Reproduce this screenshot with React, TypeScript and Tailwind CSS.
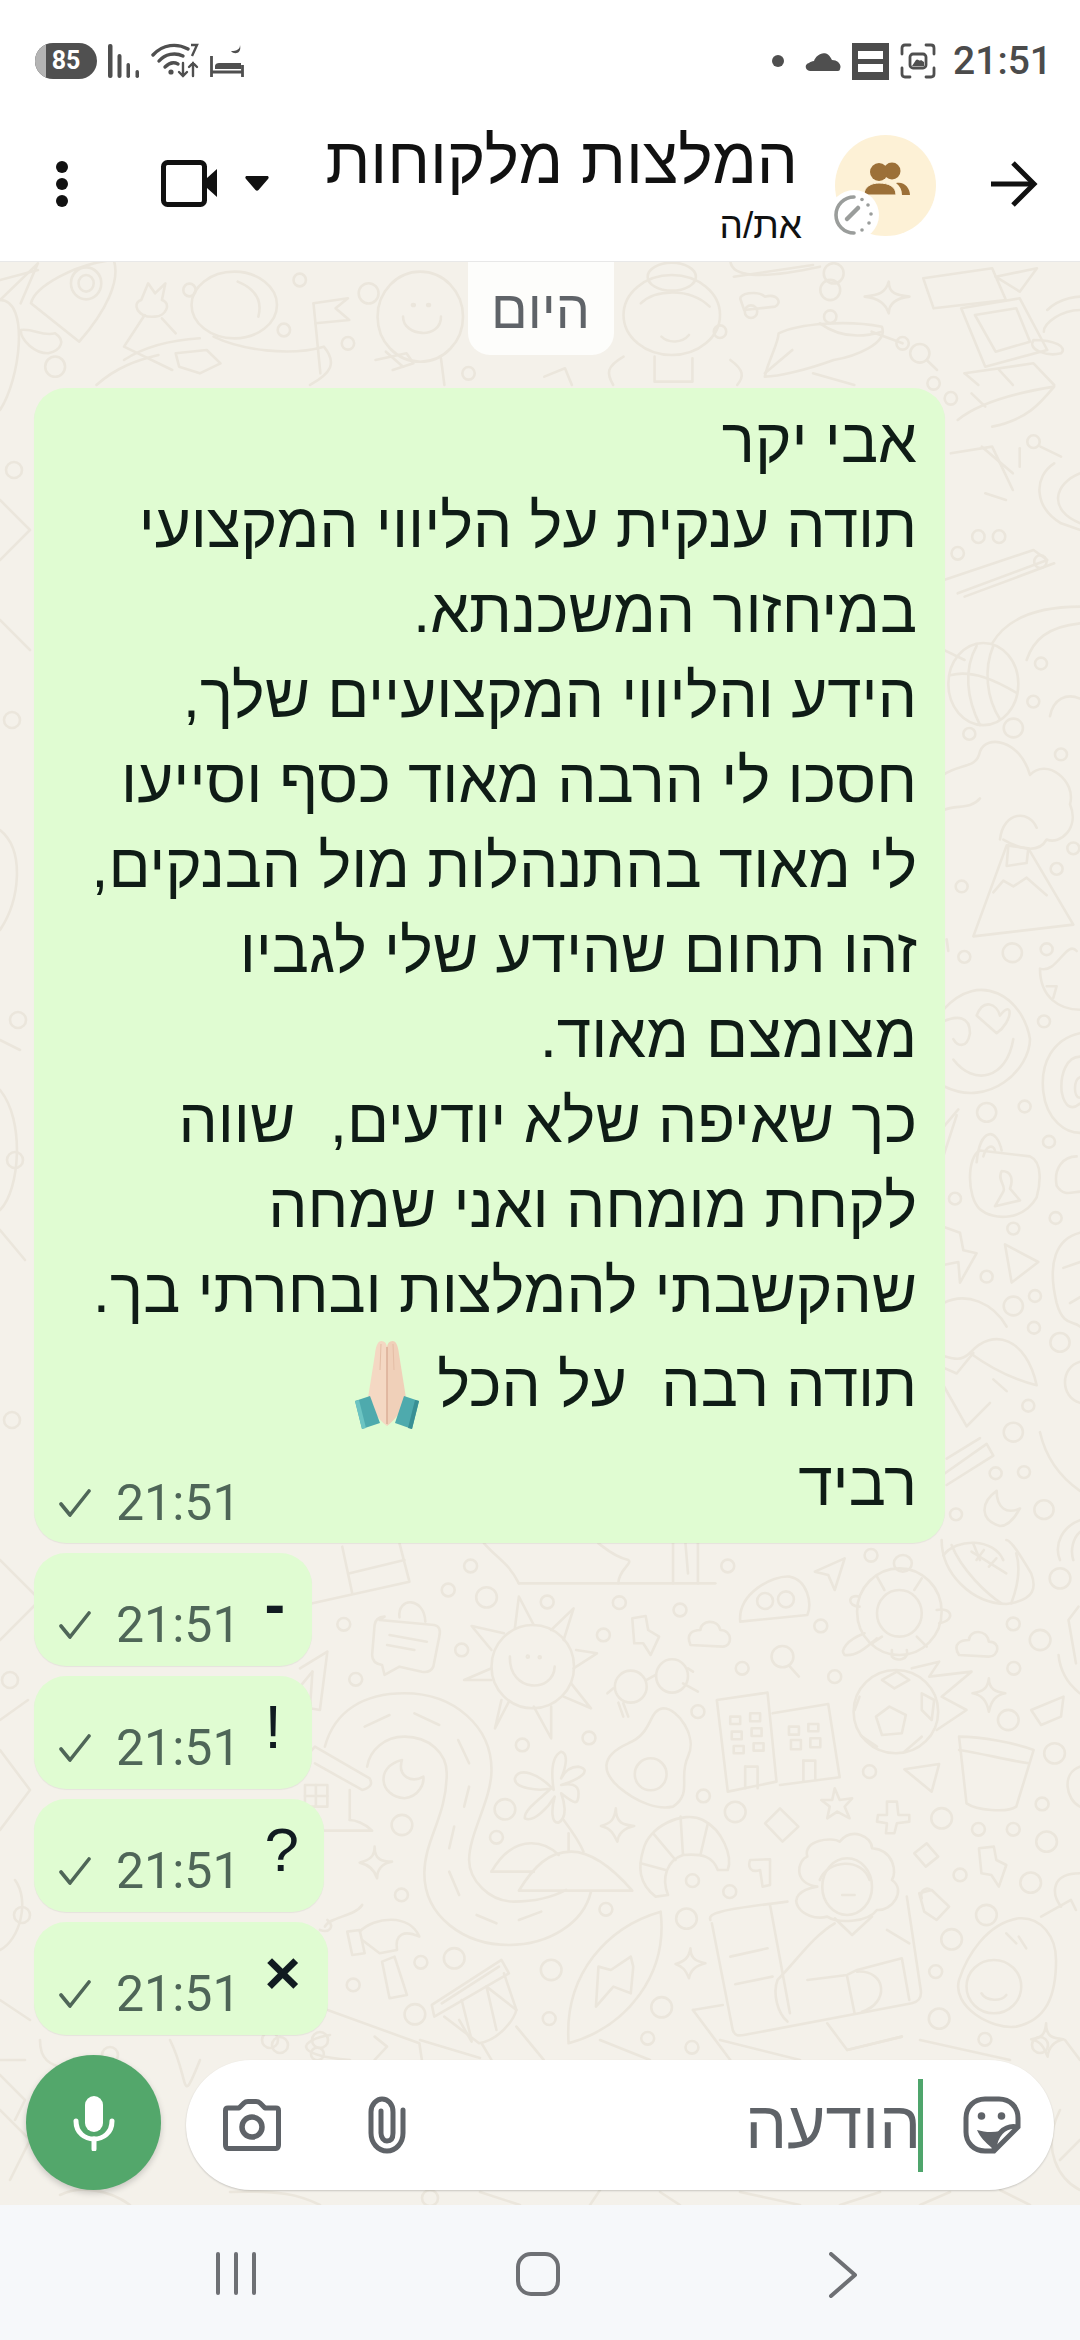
import React from "react";

const font = { fontFamily: '"Liberation Sans", "DejaVu Sans", sans-serif' };

const e = (cx: number, cy: number, rx: number, ry: number) =>
  `M${cx - rx} ${cy} A${rx} ${ry} 0 1 0 ${cx + rx} ${cy} A${rx} ${ry} 0 1 0 ${cx - rx} ${cy}Z`;

const bottomSet: string[] = [
  "M25 190 L220 125 L200 10", "M100 100 L210 60", "M85 20 L105 160", "M440 130 L835 130", "M370 10 C400 60 420 70 440 130",
  "M640 130 C640 90 670 70 660 60 C630 50 610 20 600 10", "M750 10 L750 130", "M800 10 L800 130", "M775 10 L780 100",
  "M160 240 L270 255 Q285 260 280 290 L268 380 Q262 400 245 395 L200 380 L170 405 L165 375 Q145 370 145 345 L150 255 Q152 232 170 230Z",
  "M200 232 C195 170 250 170 252 245", "M180 285 L255 305", "M175 315 L230 330",
  e(468, 380, 83, 125), "M422 350 C420 460 510 460 512 380", e(458, 350, 2, 3), e(482, 352, 2, 3),
  "M432 265 L440 170 L470 255", "M505 270 L550 205 L530 300", "M555 330 L597 340 L550 385", "M545 430 L585 505 L530 470", "M470 500 L505 595 L505 500", "M420 485 L392 565 L405 480", "M385 420 L330 420 L385 385", "M385 330 L345 258 L410 280",
  "M0 385 L55 335 L40 510 L20 505 L25 395", "M0 440 L25 395",
  "M50 620 C70 510 130 460 210 460 C310 460 385 560 385 690 C385 780 340 880 340 960 C340 1020 380 1085 430 1085 C480 1085 510 1070 535 1050",
  "M585 1055 C570 1150 500 1215 420 1215 C330 1215 250 1130 250 1000 C250 900 295 830 295 700 C295 640 260 590 210 590 C170 590 140 630 135 680",
  "M130 560 L180 525", "M230 520 L280 555", "M318 600 L340 670", "M340 740 L330 800", "M310 860 L300 925", "M300 995 L320 1065", "M355 1125 L395 1150", "M440 1140 L485 1115",
  "M0 670 L30 620 L140 715 Q150 740 125 750 L30 670", "M10 735 H55 V800 H10Z", "M32 735 V800", "M10 768 H55", "M100 750 L100 840", "M50 872 L145 872 C130 850 110 840 100 840",
  "M205 660 C150 680 160 770 210 775 C240 770 250 730 248 710 C225 730 195 710 205 660Z",
  "M150 920 C150 960 165 965 185 965 C165 970 155 990 155 1015 C150 990 140 975 120 968 C140 960 150 950 150 920Z",
  "M385 995 C410 930 440 910 465 910 C490 910 510 930 520 945", "M385 995 L470 995", "M440 1052 L668 1052 C620 970 580 935 545 935 C500 935 470 980 440 1052Z",
  "M510 750 C480 700 440 680 432 715 C430 745 480 755 505 745 C480 780 450 810 452 835 C470 850 500 800 512 770 C505 810 505 850 520 848 C540 830 530 780 525 760 C550 790 560 800 560 760 C560 730 540 730 525 735 C560 720 590 690 560 680 C540 680 530 700 525 715 C535 680 540 640 525 635 C505 650 505 700 510 750Z",
  "M530 840 C545 870 560 900 570 935", "M540 880 L540 935",
  "M730 505 C700 510 710 580 660 610 C600 650 610 700 640 740 C680 790 720 810 750 800 C790 760 760 710 780 650 C800 590 760 505 730 505Z", e(705, 703, 32, 48),
  e(665, 440, 32, 48), e(748, 408, 32, 50), "M697 420 L715 405", "M640 488 L650 530", "M650 490 L660 530", "M780 385 L790 395", "M770 430 L800 455", "M630 445 L618 460",
  "M668 235 L695 228 L700 270 L722 290 L705 345 L690 310 L672 310Z",
  "M785 315 C775 280 790 270 805 270 C805 240 840 235 845 270 C870 270 870 320 850 320Z",
  e(970, 350, 22, 32), "M985 380 L1003 410",
  "M885 245 C880 160 950 105 985 110 C1020 120 1030 190 1020 225Z", e(935, 183, 16, 24), e(977, 178, 16, 24),
  "M1035 95 L1095 55 L1075 150 L1062 105Z",
  e(1205, 215, 85, 130), e(1205, 220, 45, 70), e(1212, 70, 18, 25), "M1135 280 C1100 300 1085 330 1095 345 C1120 350 1140 320 1160 295", "M1190 330 L1190 350 C1200 365 1225 360 1220 330", "M1280 210 C1310 200 1320 240 1285 250", "M1125 170 C1100 160 1100 200 1125 200", "M1175 150 L1160 110", "M1235 150 L1250 115", "M1170 290 L1150 310", "M1240 290 L1260 320",
  "M1290 0 C1290 100 1350 190 1420 192 C1480 180 1480 140 1470 100 C1450 50 1430 0 1420 0", "M1350 35 L1420 100", "M1360 60 L1375 30", "M1385 80 L1400 55", "M1310 15 C1330 90 1380 160 1410 190", "M1440 40 C1450 90 1440 150 1430 190",
  "M1325 345 C1310 310 1330 300 1345 300 C1345 270 1380 265 1385 305 C1410 305 1405 350 1385 350Z",
  e(1198, 515, 85, 125), "M1185 500 L1218 525 L1210 580 L1170 585 L1158 530Z", "M1170 420 L1200 395 L1225 420 L1195 445Z", "M1250 460 L1275 480 L1270 540 L1250 510Z", "M1115 510 L1125 470", "M1130 590 L1160 620", "M1215 635 L1250 590",
  "M1230 385 L1285 365 L1265 410 L1350 395 L1290 470 L1340 510 L1280 570",
  "M838 480 L940 458 L958 725 L860 755Z", "M950 520 L1062 492 L1085 712 L965 735",
  "M865 530 H885 V552 H865Z", "M905 520 H925 V544 H905Z", "M868 575 H888 V598 H868Z", "M908 565 H928 V588 H908Z", "M872 618 H892 V640 H872Z", "M912 610 H932 V632 H912Z",
  "M983 560 H1003 V584 H983Z", "M1022 552 H1042 V574 H1022Z", "M987 600 H1007 V628 H987Z", "M1026 595 H1046 V622 H1026Z", "M895 680 H920 V745", "M895 680 V745", "M1012 662 H1036 V720", "M1012 662 V725",
  "M1325 590 C1370 590 1440 610 1475 630 L1440 800 C1420 820 1360 810 1340 790Z", "M1325 630 C1370 640 1420 660 1465 670",
  "M1215 688 L1285 672 L1270 755Z",
  "M1075 745 L1085 780 L1110 775 L1095 800 L1105 835 L1080 815 L1060 835 L1065 800 L1048 780 L1070 780Z",
  "M1180 785 L1200 785 L1203 825 L1225 825 L1225 845 L1200 850 L1195 880 L1178 880 L1180 850 L1160 845 L1162 825 L1180 825Z",
  "M965 805 L1002 860 L970 905 L935 850Z", "M1260 910 L1283 950 L1258 980 L1235 940Z",
  "M635 805 C635 850 650 855 672 858 C650 865 640 880 638 905 C630 880 625 865 605 858 C625 850 632 840 635 805Z",
  "M1385 415 C1385 450 1400 455 1418 460 C1400 465 1390 480 1385 515 C1380 480 1370 465 1352 460 C1370 455 1382 450 1385 415Z",
  "M690 930 C700 860 770 810 810 840 C850 870 870 950 860 990 L840 990 C830 950 810 940 770 945 C740 960 725 1010 740 1065 L715 1070 C680 1030 680 980 690 930Z", "M765 830 L770 945", "M820 850 L805 945", "M710 880 L755 960", "M685 970 L735 990",
  "M905 960 L945 958 L945 1035 L930 1040 L925 990 C905 1000 900 980 905 960Z",
  "M1365 925 L1395 920 L1400 960 L1420 975 L1405 1040 L1390 1005 L1370 1000Z",
  "M1040 1040 C990 1030 1000 960 1020 950 C1010 900 1070 890 1085 905 C1110 860 1150 890 1150 925 C1195 930 1200 1000 1190 1020 C1220 1050 1190 1115 1160 1110 C1140 1150 1080 1150 1060 1130 C1010 1150 960 1060 1040 1040Z",
  e(1100, 1040, 50, 85), "M1045 1020 C1060 960 1130 950 1145 1020", "M1090 1065 L1115 1065", "M1075 1135 L1110 1185 L1150 1130", "M1075 1150 C1030 1190 1000 1260 960 1320 C950 1360 960 1420 980 1445", "M1180 1170 L1225 1210",
  "M825 1140 C820 1120 840 1110 980 1085", "M828 1150 L870 1470 C875 1490 880 1488 900 1483 L1230 1390 C1245 1385 1250 1370 1248 1350 L1220 1070",
  "M945 1095 L985 1420", "M865 1250 L940 1225", "M875 1333 L950 1310", "M1020 1320 L1100 1305 L1120 1290 L1210 1255 L1225 1380", "M1100 1310 L1115 1420", "M1120 1295 C1180 1290 1185 1390 1130 1415",
  "M790 1410 L850 1395", "M790 1410 L865 1560", "M1210 1490 L1100 1530 L1060 1450", "M1100 1530 L1210 1490",
  "M725 1115 C620 1160 530 1300 540 1510 C660 1460 740 1300 725 1115Z", "M665 1250 L625 1290 L600 1280 L595 1400 L630 1340 L665 1360 L670 1280Z",
  "M95 1175 L120 1170 L130 1240 L105 1245Z", "M120 1175 C150 1130 220 1120 240 1190 C210 1170 190 1180 195 1230 L160 1240 L125 1200", "M165 1265 L180 1375 L215 1365 L190 1250Z",
  "M265 1395 L405 1260 L420 1300 L270 1430Z", "M285 1390 L400 1280", "M290 1430 L360 1510 C400 1500 430 1440 435 1410 L410 1300", "M320 1440 L345 1505", "M375 1340 L395 1470", "M375 1340 L435 1410", "M325 1380 L345 1500", "M365 1510 L385 1560", "M435 1460 L490 1560",
  "M785 1225 C785 1260 800 1265 815 1270 C795 1278 785 1290 782 1315 C775 1290 770 1280 755 1272 C772 1265 782 1255 785 1225Z",
  "M1445 1135 C1380 1150 1340 1250 1325 1320 C1310 1400 1390 1470 1440 1460 C1500 1440 1520 1370 1520 1260 C1520 1190 1490 1130 1445 1135Z", e(1395, 1340, 55, 80), "M1370 1360 C1380 1385 1410 1385 1420 1365", "M1490 1130 L1550 1080 L1560 1110", "M1420 1180 L1440 1210", "M1445 1190 L1460 1225",
  "M1500 1450 C1500 1490 1512 1495 1535 1498 C1515 1505 1505 1520 1503 1550 C1495 1520 1490 1505 1470 1498 C1490 1495 1498 1485 1500 1450Z",
  "M1245 1060 L1270 1050 L1305 1100 L1280 1140 L1255 1115Z", "M1250 1075 C1245 1050 1260 1040 1268 1050",
  "M0 1380 L240 1510 L245 1560", "M150 1490 L175 1520 L150 1560", "M55 1140 C70 1160 60 1180 40 1170", "M125 1095 C110 1130 60 1130 50 1160",
  "M1565 200 L1545 240 L1560 370", "M1525 345 C1530 420 1560 450 1568 460", "M1470 510 L1535 470 L1530 530 L1490 555Z", "M1568 680 C1530 700 1540 780 1568 800", "M1568 1000 C1510 1000 1510 1060 1530 1100",
];

const bottomDots: [number, number, number][] = [
  [343, 78, 1], [298, 150, 1], [375, 172, 2], [497, 186, 1], [642, 188, 1], [764, 210, 1], [88, 253, 1], [610, 285, 1], [325, 330, 1], [112, 418, 1], [889, 385, 1], [1075, 410, 1], [1047, 258, 1], [860, 78, 1], [1148, 46, 1], [1528, 115, 2], [1434, 252, 1], [1488, 300, 2], [1435, 385, 1], [1424, 540, 2], [800, 515, 1], [447, 615, 1], [581, 594, 1], [1145, 695, 1], [1517, 640, 2], [412, 808, 2], [811, 768, 1], [875, 816, 2], [205, 855, 2], [395, 892, 1], [1290, 835, 2], [1492, 792, 1], [1364, 868, 1], [1434, 868, 1], [1501, 905, 2], [204, 1065, 1], [789, 1022, 1], [864, 1055, 1], [1327, 1005, 1], [1469, 1028, 2], [615, 1108, 1], [777, 1136, 2], [1380, 1125, 2], [1310, 1198, 2], [310, 1255, 2], [243, 1267, 1], [107, 1335, 1], [231, 1423, 2], [505, 1290, 2], [727, 1402, 2], [501, 1436, 1], [1278, 1295, 1], [1285, 1436, 2], [1377, 1498, 1], [699, 1495, 1], [788, 1522, 1], [35, 1542, 1],
];

const rightSet: string[] = [
  e(310, 75, 105, 70), "M210 60 C280 50 350 70 410 90", "M290 10 C250 50 260 100 300 145", "M340 10 C310 50 320 100 360 135",
  "M510 130 C520 100 560 90 600 100", "M190 230 C240 210 290 220 300 190 C320 160 420 170 450 230 C500 200 590 240 570 280 C600 320 540 350 500 340 C470 370 400 350 370 340", "M190 290 C230 280 270 290 300 270", "M360 340 C370 290 450 290 470 320",
  "M280 505 L380 350 L445 355 L580 485Z", "M385 350 L380 385 L440 380 L445 355", "M340 430 L370 410 L400 420 L440 405 L500 435",
  "M190 630 C300 560 430 610 450 680 C450 730 330 800 190 760", "M290 640 C310 610 350 620 360 640 C400 610 400 650 350 670 Z", "M190 650 C230 640 270 640 270 670 C260 700 230 690 220 680", "M220 715 C280 760 380 750 400 680",
  "M600 670 C520 680 480 720 490 770 C500 820 560 840 600 840", "M600 710 C560 710 540 740 545 770 C555 800 580 800 600 790", "M600 745 C580 750 580 780 600 780",
  "M590 530 C560 510 530 570 480 560 C480 610 540 630 600 630", "M500 590 L530 590 L520 610",
  "M590 880 C550 880 520 900 530 930 C550 950 580 940 600 940", "M190 830 L235 800", "M190 880 L230 810",
  "M290 890 C300 830 350 830 365 870", "M310 880 C320 860 340 860 345 870", "M300 870 L450 880 C490 890 480 930 470 950 C430 990 340 990 300 970 C260 950 260 880 300 870Z", "M365 905 C350 920 380 930 370 940 L345 965 L420 955 L390 935 C400 920 395 905 365 905Z",
  "M190 1000 L240 1010 L250 1040 L290 1045 L240 1095 L235 1060 L190 1065", "M375 1030 L475 1060 L395 1095Z",
  "M190 1130 C260 1110 340 1130 380 1170", "M270 1215 C340 1170 440 1190 470 1270 C400 1260 330 1240 270 1215Z", "M190 1240 L230 1250 L280 1215", "M190 1270 L260 1340 L330 1300", "M340 1260 L380 1280",
  "M195 1420 L320 1370 L340 1390 L200 1440", "M200 1395 L300 1360", "M350 1450 C300 1470 300 1500 360 1510 C390 1510 410 1490 420 1480 C380 1490 350 1480 350 1450Z",
  "M600 1230 C540 1240 540 1290 600 1300", "M480 1350 C500 1400 550 1430 600 1450", "M600 1010 C530 1020 500 1060 530 1130 C550 1170 580 1160 600 1170", "M550 1070 L600 1060", "M570 1130 L600 1120", "M600 1500 C550 1510 520 1540 540 1568", "M190 1560 C230 1530 340 1530 370 1568", "M280 1540 L300 1568", "M600 1520 C580 1530 570 1550 580 1568", "M200 510 L205 530", "M190 1220 C220 1225 240 1230 270 1215",
];

const rightDots: [number, number, number][] = [
  [483, 40, 1], [460, 105, 1], [268, 160, 1], [400, 150, 2], [543, 195, 1], [245, 420, 1], [530, 390, 1], [580, 355, 1], [253, 540, 1], [397, 533, 2], [500, 527, 1], [492, 650, 1], [320, 805, 2], [434, 795, 1], [507, 855, 1], [225, 952, 1], [527, 985, 1], [400, 1003, 1], [320, 1085, 1], [465, 1118, 1], [400, 1135, 2], [462, 1172, 1], [540, 1197, 2], [445, 1305, 1], [400, 1350, 2], [347, 1420, 1], [432, 1418, 1], [492, 1482, 2], [228, 1490, 1],
];

const topSet: string[] = [
  "M0 120 L55 10 L30 130", "M0 60 L55 30", "M45 130 C50 80 110 10 165 0 C175 60 155 150 115 245 L45 130Z", e(125, 70, 22, 48), e(125, 70, 11, 25), "M30 210 C30 240 50 280 70 280 C90 270 95 240 80 220 C60 230 50 205 30 210Z",
  "M205 120 L215 70 L225 100 L240 70 L235 120 C250 130 240 170 225 170 C200 175 190 130 205 120Z", "M210 165 L180 260 L250 330", "M235 175 L255 220",
  e(340, 135, 62, 100), "M345 65 C375 90 380 130 375 170", "M255 280 L300 270 L320 310 L290 340 L260 320Z", "M180 300 C210 260 250 240 290 235", "M310 230 C350 270 420 290 470 260 C490 310 480 340 450 375", "M140 375 C170 320 200 300 230 285",
  "M455 130 L505 115 L487 145 L507 180 L458 190", "M455 130 L465 340",
  e(610, 170, 62, 135), "M585 170 C585 230 640 240 640 170", e(600, 135, 2, 3), e(622, 135, 2, 3), "M545 300 L590 280 L600 310 L570 330", "M560 275 L585 320",
  "M1060 0 C1060 50 1100 60 1190 20", "M1065 50 L1180 15",
  e(975, 165, 70, 120), e(975, 50, 35, 42), "M930 130 C950 90 1000 80 1030 140", "M960 230 C970 250 990 250 1000 225", "M905 290 C880 320 880 340 890 375", "M1060 300 C1080 330 1080 350 1070 375", "M950 290 L950 365 L1005 365 L1005 295",
  "M1290 65 C1290 100 1300 105 1320 110 C1300 115 1290 130 1290 160 C1285 130 1275 115 1255 110 C1275 105 1285 100 1290 65Z",
  "M1340 55 L1440 25 L1460 120 L1355 145Z", "M1395 145 L1480 115 L1520 270 L1430 320Z", "M1415 165 L1475 145 L1495 245 L1445 275Z",
  "M1445 50 L1505 25 L1480 95Z", "M1520 150 C1540 110 1568 110 1568 110", "M1515 215 C1515 190 1540 150 1568 150", "M1500 240 C1490 270 1520 290 1540 280 C1550 260 1530 240 1500 240Z",
  "M1130 220 C1160 190 1230 180 1280 200 C1290 250 1240 290 1210 300 C1170 330 1130 350 1110 350 C1115 300 1130 250 1130 220Z", "M1190 190 C1210 220 1240 240 1280 215", "M1150 270 L1110 340",
  "M1075 120 C1070 100 1100 90 1110 110 C1130 100 1135 130 1125 140 L1080 150Z", e(1335, 280, 14, 28), "M1345 300 L1360 330", "M1400 340 L1500 310 L1530 375", "M1400 340 L1420 375", "M1450 330 L1470 375",
  "M790 350 L820 325 L830 375", "M640 295 L645 375", "M1265 215 L1310 250", "M1180 340 L1240 375",
];

const topDots: [number, number, number][] = [
  [435, 60, 1], [275, 90, 1], [412, 210, 1], [505, 250, 1], [535, 100, 2], [1045, 215, 1], [1090, 155, 1], [1205, 170, 1], [1205, 90, 2], [1210, 40, 2], [1355, 370, 1], [80, 320, 2], [680, 340, 1], [1310, 250, 1],
];

const midSet: string[] = [
  "M1390 480 C1420 430 1470 400 1530 380 C1510 430 1490 480 1440 500", "M1410 400 L1430 440", "M1380 580 L1440 560 L1470 690", "M1425 560 L1470 640", "M1530 610 C1500 650 1500 740 1540 790 L1568 810", "M1568 640 C1530 670 1520 750 1568 790", "M1430 700 L1460 720", "M1370 960 L1500 870 L1520 900 L1390 1000", "M1400 1010 L1530 910", "M1568 1040 C1500 1040 1460 1080 1440 1150", "M1568 1090 C1520 1100 1500 1140 1490 1200", "M1360 1160 L1400 1200", "M1480 565 L1480 620", "M1510 560 L1540 590",
];
const midDots: [number, number, number][] = [
  [1380, 415, 1], [1500, 545, 1], [1450, 830, 1], [1390, 880, 1], [1510, 905, 1], [1420, 830, 1],
];

const leftSet: string[] = [
  "M0 300 C30 300 20 380 0 410", "M0 620 L30 650", "M0 830 C25 850 20 900 0 930", "M0 1230 L25 1260", "M0 500 L30 530 L0 560", "M0 1040 L20 1050", "M0 1090 C25 1120 20 1190 0 1210",
  "M0 1560 L40 1600 L0 1640", "M0 1750 L30 1790 L0 1830", "M0 2000 L30 2020", "M15 1880 C30 1900 20 1940 0 1950", "M0 2110 L30 2140 L10 2180", "M0 2060 L25 2060", "M0 1720 L28 1700",
];
const farBottom: string[] = [
  "M40 2040 C40 2060 50 2065 65 2068 C50 2072 42 2080 40 2100", "M0 2075 L25 2100 L15 2120", "M170 2040 C190 2080 180 2110 200 2060", "M330 2035 C300 2040 290 2055 350 2060", "M420 2040 L480 2058", "M600 2040 L650 2060", "M720 2040 L800 2060", "M920 2040 L1010 2060",
  "M60 2195 C80 2185 110 2190 130 2205", "M230 2192 C280 2190 300 2195 320 2205", "M480 2192 L520 2205", "M600 2190 L590 2205", "M660 2192 L680 2205", "M740 2192 L800 2205", "M880 2192 L840 2205", "M950 2192 L920 2205", "M1000 2190 L1030 2205", "M1060 2110 C1040 2150 1060 2180 1080 2190", "M1065 2040 L1080 2060", "M1060 2160 L1080 2140",
];

function Layer({ t, paths, dots, dr }: { t: string; paths: string[]; dots: [number, number, number][]; dr: [number, number] }) {
  return (
    <g transform={t}>
      {paths.map((d, i) => (
        <path key={i} d={d} vectorEffect="non-scaling-stroke" />
      ))}
      {dots.map(([x, y, k], i) => (
        <path key={`d${i}`} d={e(x, y, dr[0] * k * (k === 2 ? 0.8 : 1), dr[1] * k * (k === 2 ? 0.8 : 1))} vectorEffect="non-scaling-stroke" />
      ))}
    </g>
  );
}

function Doodles() {
  return (
    <svg className="absolute left-0 top-0" width="1080" height="1943" viewBox="0 262 1080 1943" fill="none" stroke="#ebe6dc" strokeWidth="2.6" strokeLinecap="round" strokeLinejoin="round">
      <Layer t="translate(300 1540) scale(0.4974 0.3333)" paths={bottomSet} dots={bottomDots} dr={[13, 19]} />
      <Layer t="translate(880 640) scale(0.3333 0.5868)" paths={rightSet} dots={rightDots} dr={[18, 10]} />
      <Layer t="translate(0 260) scale(0.689 0.3333)" paths={[...topSet, ...midSet]} dots={[...topDots, ...midDots]} dr={[9, 19]} />
      <Layer t="translate(0 0)" paths={[...leftSet, ...farBottom]} dots={[[14, 470, 1], [12, 720, 1], [18, 1020, 1], [15, 1160, 1], [12, 1420, 1], [10, 1680, 1], [22, 1915, 1], [110, 2055, 1], [280, 2045, 1], [320, 2040, 1], [270, 2040, 1], [430, 2198, 1], [1040, 2045, 1]]} dr={[8, 8]} />
    </svg>
  );
}

function Check() {
  return (
    <svg width="32" height="28" viewBox="0 0 32 28" fill="none" stroke="#4f6658" strokeWidth="3.6" strokeLinecap="round" strokeLinejoin="round">
      <path d="M2 15 L11 26 L30 2" />
    </svg>
  );
}

function Meta() {
  return (
    <div className="flex items-center gap-[25px] text-[#4f6658] text-[50px] leading-[44px] font-['Roboto']">
      <Check />
      <span>21:51</span>
    </div>
  );
}

function Small({ t, w, cls }: { t: string; w: string; cls: string }) {
  return (
    <div className={`${w} h-[113px] rounded-[32px] bg-[#e0fcd2] pl-[25px] flex items-end pb-[19px] shadow-[0_1px_1px_rgba(0,0,0,0.06)]`}>
      <Meta />
      <span className={`ml-[24px] mb-[8px] text-[#111b21] text-[62px] leading-[70px] ${cls}`}>{t}</span>
    </div>
  );
}

function Pray() {
  return (
    <svg width="68" height="90" viewBox="0 0 68 90">
      <path d="M34 86 C24 78 17 68 15 58 L22 14 C23 5 25 1 28.5 1 C31.5 1 33.5 3 34 7Z" fill="#f4d8c3" />
      <path d="M34 86 C44 78 51 68 53 58 L46 14 C45 5 43 1 39.5 1 C36.5 1 34.5 3 34 7Z" fill="#f0d0b9" />
      <path d="M34 7 L34 84" stroke="#d9ad95" strokeWidth="1.4" />
      <path d="M28 4 L27 30 M40 4 L41 30" stroke="#e5bea6" strokeWidth="1" />
      <path d="M2 61 L17 56 L27 83 L9 89Z" fill="#4eaaad" />
      <path d="M66 61 L51 56 L42 83 L59 89Z" fill="#4eaaad" />
      <path d="M2 61 L9 89 L13 88 L6 60Z" fill="#6cc4c2" />
      <path d="M66 61 L59 89 L55 88 L62 60Z" fill="#398f94" />
    </svg>
  );
}

const lines = [
  "אבי יקר",
  "תודה ענקית על הליווי המקצועי",
  "במיחזור המשכנתא.",
  "הידע והליווי המקצועיים שלך,",
  "חסכו לי הרבה מאוד כסף וסייעו",
  "לי מאוד בהתנהלות מול הבנקים,",
  "זהו תחום שהידע שלי לגביו",
  "מצומצם מאוד.",
  "כך שאיפה שלא יודעים,  שווה",
  "לקחת מומחה ואני שמחה",
  "שהקשבתי להמלצות ובחרתי בך.",
];

function StatusLeft() {
  return (
    <div className="flex items-center gap-[11px]">
      <div className="w-[62px] h-[36px] rounded-full bg-[#505050] text-white text-[25px] font-bold flex items-center justify-center font-['Roboto'] relative overflow-hidden">
        <div className="absolute left-0 top-0 bottom-0 w-[11px] bg-[#b4b4b4]" />
        <span className="relative">85</span>
      </div>
      <svg width="32" height="36" viewBox="0 0 32 36" fill="#4f4f4f">
        <rect x="0" y="1" width="4.5" height="34" rx="2" />
        <rect x="9.5" y="11" width="4" height="24" rx="2" />
        <rect x="18.5" y="20" width="3.5" height="15" rx="1.7" />
        <rect x="27.5" y="27" width="3.5" height="8" rx="1.7" />
      </svg>
      <svg width="48" height="36" viewBox="0 0 48 36" fill="none" stroke="#4f4f4f" strokeWidth="3.4" strokeLinecap="round">
        <path d="M2 12 C12 1 26 0 37 6" />
        <path d="M8 18 C14 11 24 9 32 13" />
        <path d="M14 24 C18 20 23 19 27 21" />
        <circle cx="20" cy="29" r="2.6" fill="#4f4f4f" stroke="none" />
        <path d="M40 2 H46 L41 13" strokeWidth="2.4" strokeLinecap="butt" />
        <path d="M32 20 V33 M28 29 L32 33 L36 29 M42 33 V20 M38 24 L42 20 L46 24" strokeWidth="2.4" />
      </svg>
      <svg width="34" height="34" viewBox="0 0 34 34" fill="none" stroke="#4f4f4f" strokeWidth="2.8">
        <path d="M1.5 12 V33 M1.5 28 H32.5 M32.5 21 V33" />
        <path d="M5 22 C5 20 7 19 9 19 H31 V25 H5Z" fill="#4f4f4f" stroke="none" />
        <path d="M30 1 C30 5 27 7 21 7 C24 11 32 10 30 1Z" fill="#4f4f4f" stroke="none" />
      </svg>
    </div>
  );
}

function StatusRight() {
  return (
    <div className="flex items-center">
      <div className="w-[12px] h-[12px] rounded-full bg-[#4f4f4f] mr-[21px]" />
      <svg className="mr-[11px]" width="36" height="22" viewBox="0 0 36 22" fill="#4f4f4f">
        <path d="M5 21 C0 21 -1 14 4 13 C5 12 7 11 9 11 C11 4 22 -2 27 10 C33 10 37 15 35 19 C35 20 34 21 33 21Z" />
      </svg>
      <div className="w-[37px] h-[37px] bg-[#4c4c4c] flex flex-col justify-center gap-[5px] px-[6px] mr-[11px]">
        <div className="h-[8px] bg-white" />
        <div className="h-[8px] bg-white" />
      </div>
      <svg className="mr-[17px]" width="36" height="36" viewBox="0 0 36 36" fill="none" stroke="#4f4f4f" strokeWidth="2.8" strokeLinecap="round">
        <path d="M2 11 V5 C2 3 3 2 5 2 H10 M26 2 H31 C33 2 34 3 34 5 V11 M34 25 V31 C34 33 33 34 31 34 H26 M10 34 H5 C3 34 2 33 2 31 V25" />
        <rect x="10" y="11" width="16" height="14" rx="3" />
        <path d="M12 23 L16 17 C18 15 19 19 21 17 L24 19 V23Z" fill="#4f4f4f" stroke="none" />
      </svg>
      <span className="text-[39px] font-medium leading-none font-['Roboto'] text-[#4b4b4b]">21:51</span>
    </div>
  );
}

function Header() {
  return (
    <div className="h-[152px] flex items-center border-b border-[#e8e8e8] pl-[56px] pr-[41px]">
      <svg width="12" height="46" viewBox="0 0 12 46" fill="#111" className="mt-[-4px]">
        <circle cx="6" cy="6" r="6" />
        <circle cx="6" cy="23" r="6" />
        <circle cx="6" cy="40" r="6" />
      </svg>
      <svg className="ml-[93px] mt-[-4px]" width="57" height="47" viewBox="0 0 57 47" fill="none">
        <rect x="2.5" y="2.5" width="41" height="42" rx="4" stroke="#111" strokeWidth="5" />
        <path d="M46 18 L56 9 V37 L46 28Z" fill="#111" />
      </svg>
      <svg className="ml-[27px] mt-[-4px]" width="24" height="15" viewBox="0 0 24 15" fill="#111">
        <path d="M2 0 H22 C24 0 24 2 23 3 L13.5 14 C12.5 15 11.5 15 10.5 14 L1 3 C0 2 0 0 2 0Z" />
      </svg>
      <div className="flex-1 text-[#111]" dir="rtl">
        <div className="text-[65px] leading-[70px] pr-[4px]">המלצות מלקוחות</div>
        <div className="text-[37px] leading-[40px] mt-[10px]">את/ה</div>
      </div>
      <div className="ml-[33px] w-[101px] h-[101px] rounded-full bg-[#fdf1d6] relative flex items-center justify-center shrink-0">
        <svg width="46" height="36" viewBox="0 0 46 36" fill="#9c7038" className="mt-[-12px] ml-[2px]">
          <circle cx="28" cy="9" r="8.5" />
          <path d="M32 21 C40 19 46 26 46 33 H38 C38 28 36 24 32 21Z" />
          <circle cx="15" cy="10" r="9" fill="#9c7038" />
          <path d="M0 33 C0 24 8 21 15 21 C24 21 32 24 32 33Z" stroke="#fdf1d6" strokeWidth="1" />
        </svg>
        <div className="absolute left-[-6px] top-[55px] w-[50px] h-[50px] rounded-full bg-white flex items-center justify-center">
          <svg width="40" height="40" viewBox="0 0 40 40" fill="none" stroke="#9a9d9b" strokeWidth="3.6" strokeLinecap="round">
            <path d="M20 2 C10 2 2 10 2 20 C2 30 10 38 20 38" />
            <path d="M13 24 L24 13" strokeWidth="4.5" />
            <circle cx="28" cy="4.5" r="1.8" fill="#9a9d9b" stroke="none" />
            <circle cx="34" cy="10" r="1.8" fill="#9a9d9b" stroke="none" />
            <circle cx="37" cy="19" r="1.8" fill="#9a9d9b" stroke="none" />
            <circle cx="35" cy="28" r="1.8" fill="#9a9d9b" stroke="none" />
            <circle cx="28" cy="35" r="1.8" fill="#9a9d9b" stroke="none" />
          </svg>
        </div>
      </div>
      <svg className="ml-[55px] mt-[-4px]" width="48" height="46" viewBox="0 0 48 46" fill="none" stroke="#111" strokeWidth="5">
        <path d="M0 23 H43" />
        <path d="M22 2 L43 23 L22 44" />
      </svg>
    </div>
  );
}

function InputBar() {
  return (
    <div className="relative mt-auto flex items-end pl-[26px] pr-[26px] pb-[15px]">
      <div className="w-[135px] h-[135px] rounded-full bg-[#53a76b] shadow-[0_3px_6px_rgba(0,0,0,0.18)] flex items-center justify-center shrink-0">
        <svg width="42" height="56" viewBox="0 0 42 56" fill="none">
          <rect x="12" y="1" width="18" height="36" rx="9" fill="#fff" />
          <path d="M3 26 C3 50 39 50 39 26" stroke="#fff" strokeWidth="5" strokeLinecap="round" />
          <path d="M21 44 V54" stroke="#fff" strokeWidth="5" strokeLinecap="round" />
        </svg>
      </div>
      <div className="ml-[25px] flex-1 h-[130px] rounded-full bg-white shadow-[0_1px_2px_rgba(0,0,0,0.18)] flex items-center pl-[37px] pr-[33px]">
        <svg width="58" height="52" viewBox="0 0 58 52" fill="none" stroke="#5f6368" strokeWidth="5" strokeLinejoin="round">
          <path d="M5 9 H16 L21 4 C22 3 23 2.5 25 2.5 H33 C35 2.5 36 3 37 4 L42 9 H53 C54.5 9 55.5 10 55.5 11.5 V46 C55.5 48 54.5 49.5 53 49.5 H5 C3.5 49.5 2.5 48 2.5 46 V11.5 C2.5 10 3.5 9 5 9Z" />
          <circle cx="29" cy="28" r="10" strokeWidth="5.5" />
        </svg>
        <svg className="ml-[87px]" width="38" height="58" viewBox="0 0 38 58" fill="none" stroke="#5f6368" strokeWidth="5" strokeLinecap="round">
          <path d="M35 14 V37 C35 47 28 55 19 55 C10 55 3 47 3 37 V16 C3 8 9 3 14 3 C20 3 25 8 25 16 V37 C25 42 23 45 19 45 C16 45 13 42 13 37 V15" />
        </svg>
        <div className="flex-1 flex items-center justify-start" dir="rtl">
          <div className="w-[5px] h-[93px] bg-[#4fa56c] relative z-10" />
          <span className="text-[#5f6368] text-[66px] leading-none mr-[-3px]">הודעה</span>
        </div>
        <svg className="ml-[40px]" width="58" height="58" viewBox="0 0 58 58" fill="none" stroke="#5f6368" strokeWidth="5">
          <path d="M22 3 H36 C47 3 55 11 55 22 V31 L31 55 H22 C11 55 3 47 3 36 V22 C3 11 11 3 22 3Z" />
          <path d="M55 31 C41 28 31 40 31 55" />
          <circle cx="18.5" cy="20" r="3.8" fill="#5f6368" stroke="none" />
          <circle cx="38.5" cy="20" r="3.8" fill="#5f6368" stroke="none" />
          <path d="M14 34 C24 37 36 37 46 32 C38 35 31 41 29 52 C22 46 17 41 14 34Z" fill="#5f6368" stroke="none" />
        </svg>
      </div>
    </div>
  );
}

function NavBar() {
  return (
    <div className="h-[135px] bg-[#f6f8fa] flex items-start pt-[47px] pl-[216px]">
      <div className="flex gap-[14px]">
        <div className="w-[4px] h-[43px] rounded-full bg-[#6e7074]" />
        <div className="w-[4px] h-[43px] rounded-full bg-[#6e7074]" />
        <div className="w-[4px] h-[43px] rounded-full bg-[#6e7074]" />
      </div>
      <div className="ml-[260px] w-[44px] h-[44px] rounded-[15px] border-[4px] border-[#6e7074]" />
      <svg className="ml-[268px]" width="30" height="46" viewBox="0 0 30 46" fill="none" stroke="#6e7074" strokeWidth="4" strokeLinecap="round" strokeLinejoin="round">
        <path d="M3 2 L27 23 L3 44" />
      </svg>
    </div>
  );
}

export default function App() {
  return (
    <div className="w-[1080px] h-[2340px] bg-white flex flex-col overflow-hidden" style={font}>
      <div className="h-[110px] flex items-center justify-between pl-[35px] pr-[28px] pt-[12px]">
        <StatusLeft />
        <StatusRight />
      </div>
      <Header />
      <div className="flex-1 relative bg-[#f4f1ea] flex flex-col min-h-0">
        <Doodles />
        <div className="relative self-center ml-[1px] w-[146px] h-[93px] rounded-b-[22px] bg-[#fdfdfb] flex items-center justify-center text-[#5f6368] text-[54px] leading-none" dir="rtl">
          היום
        </div>
        <div className="relative px-[34px] flex flex-col gap-[10px] mt-[33px]">
          <div className="relative w-[911px] h-[1155px] rounded-[32px] bg-[#e0fcd2] pr-[28px] pt-[10px] shadow-[0_1px_1px_rgba(0,0,0,0.06)]" dir="rtl">
            <div className="text-[#0f1c16] text-[62px] leading-[85px]">
              {lines.map((l) => (
                <div key={l} className="whitespace-pre">{l}</div>
              ))}
              <div className="h-[92px] mt-[6px] leading-[92px] whitespace-pre flex items-center gap-[16px]">
                <span>תודה רבה  על הכל</span>
                <Pray />
              </div>
              <div className="mt-[10px]">רביד</div>
            </div>
            <div className="absolute left-[25px] bottom-[18px]" dir="ltr">
              <Meta />
            </div>
          </div>
          <Small t="-" w="w-[278px]" cls="font-bold" />
          <Small t="!" w="w-[278px]" cls="" />
          <Small t="?" w="w-[290px]" cls="" />
          <Small t="×" w="w-[294px]" cls="font-bold" />
        </div>
        <InputBar />
      </div>
      <NavBar />
    </div>
  );
}
